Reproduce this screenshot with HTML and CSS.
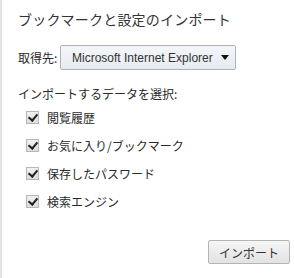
FILE: index.html
```html
<!DOCTYPE html>
<html lang="ja">
<head>
	<meta charset="UTF-8">
	<title>ブックマークと設定のインポート</title>
	<link rel="stylesheet" href="styles.css">
</head>
<body>
	<div class="dialog">
		<h1 class="title">ブックマークと設定のインポート</h1>

		<div class="source">
			<span class="source-label">取得先:</span>
			<div class="select">
				<span class="select-text">Microsoft Internet Explorer</span>
				<span class="select-arrow"></span>
			</div>
		</div>

		<div class="section-label">インポートするデータを選択:</div>
		<ul class="items">
			<li><span class="check"></span>閲覧履歴</li>
			<li><span class="check"></span>お気に入り/ブックマーク</li>
			<li><span class="check"></span>保存したパスワード</li>
			<li><span class="check"></span>検索エンジン</li>
		</ul>

		<div class="actions">
			<button class="btn">インポート</button>
		</div>
	</div>
</body>
</html>
```

FILE: styles.css
```css
*{
	padding: 0;
	margin: 0;
	list-style: none;
	box-sizing: border-box;
}
html,body{
	width: 294px;
	height: 278px;
	background: #fff;
	overflow: hidden;
}
body{
	font-family: "Noto Sans CJK JP", "Liberation Sans", sans-serif;
	font-size: 12px;
	color: #2a2a2a;
	border-left: 2px solid #e4e4e4;
}
.dialog{
	height: 278px;
	padding: 9px 4px 0 16px;
	display: flex;
	flex-direction: column;
}
.title{
	font-size: 14px;
	font-weight: normal;
	color: #333;
	line-height: 20px;
	letter-spacing: 0.2px;
}
.source{
	display: flex;
	align-items: center;
	margin-top: 16px;
}
.source-label{
	width: 42px;
}
.select{
	width: 176px;
	height: 25px;
	border: 1px solid #a6b4c4;
	border-radius: 2px;
	background: linear-gradient(#f4f6f9, #e6ebf1);
	display: flex;
	align-items: center;
	padding-left: 11px;
	font-family: "Liberation Sans", sans-serif;
	font-size: 12px;
	color: #333;
}
.select-text{
	flex: 1;
}
.select-arrow{
	width: 0;
	height: 0;
	border-left: 4px solid transparent;
	border-right: 4px solid transparent;
	border-top: 5px solid #111;
	margin-right: 6px;
}
.section-label{
	margin-top: 16px;
	line-height: 16px;
}
.items{
	margin-top: 1px;
	padding-left: 8px;
}
.items li{
	display: flex;
	align-items: center;
	height: 28px;
}
.check{
	width: 13px;
	height: 13px;
	border: 1px solid #b8b8b8;
	background: linear-gradient(#f2f2f2, #dcdcdc);
	margin-right: 8px;
	position: relative;
}
.check:after{
	content: "";
	position: absolute;
	left: 3px;
	top: 0px;
	width: 4px;
	height: 7px;
	border-right: 2px solid #222;
	border-bottom: 2px solid #222;
	transform: rotate(40deg);
}
.actions{
	margin-top: auto;
	margin-bottom: 14px;
	display: flex;
	justify-content: flex-end;
}
.btn{
	width: 82px;
	height: 24px;
	border: 1px solid #b4b4b4;
	border-radius: 2px;
	background: linear-gradient(#f6f6f6, #e2e2e2);
	font-family: "Noto Sans CJK JP", sans-serif;
	font-size: 12px;
	color: #333;
}
```
